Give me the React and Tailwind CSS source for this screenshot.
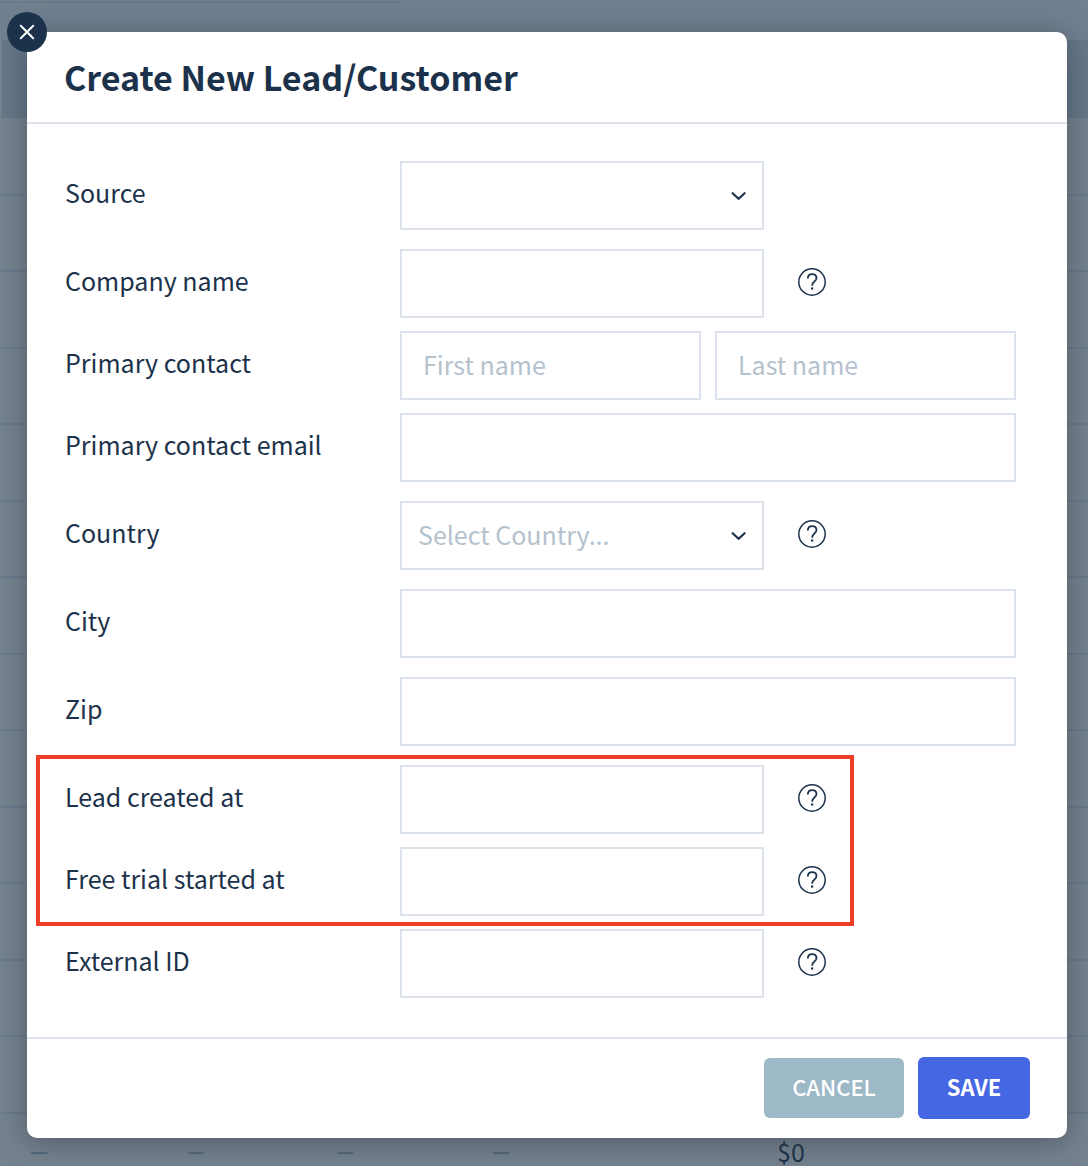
import { useState } from "react";

const tableRows = Array.from({ length: 14 }, (_, i) => i);

const HelpButton = ({ topic }) => (
  <button type="button" aria-label={`Help: ${topic}`} className="ml-[34px] shrink-0 pb-1">
    <svg
      className="h-7 w-7"
      viewBox="0 0 28 28"
      fill="none"
      stroke="currentColor"
      strokeWidth="1.5"
    >
      <circle cx="14" cy="14" r="13.2" />
      <path
        strokeWidth="1.8"
        d="M9.8 10.4C9.8 7.7 11.5 6.1 14.1 6.1S18.5 7.7 18.5 9.9C18.5 11.7 17.5 12.6 16.2 13.7C14.7 14.9 14.1 15.7 14.1 17.7"
      />
      <path strokeWidth="2.2" d="M14.1 19.4V21.6" />
    </svg>
  </button>
);

const FieldRow = ({ id, label, help, children }) => (
  <div className="flex items-center">
    <label htmlFor={id} className="w-[335px] shrink-0 pb-2">
      {label}
    </label>
    <div className="flex min-w-0 flex-1 items-center">
      {children}
      {help && <HelpButton topic={label} />}
    </div>
  </div>
);

const TextField = ({ id, short, ...props }) => (
  <input
    id={id}
    type="text"
    className={`h-[69px] min-w-0 border-2 border-[#dce3ec] bg-white px-[21px] pb-1 outline-none placeholder:text-[#b4c2ce] focus:border-[#4667e3] ${
      short ? "w-[364px]" : "w-full"
    }`}
    {...props}
  />
);

const SelectField = ({ id, placeholder = "", options }) => {
  const [value, setValue] = useState("");

  return (
    <div className="relative w-[364px]">
      <select
        id={id}
        value={value}
        onChange={(e) => setValue(e.target.value)}
        className={`h-[69px] w-full appearance-none border-2 border-[#dce3ec] bg-white pr-12 pb-1 pl-4 leading-10 outline-none focus:border-[#4667e3] ${
          value ? "text-[#1c324b]" : "text-[#b4c2ce]"
        }`}
      >
        <option value="">{placeholder}</option>
        {options.map((option) => (
          <option key={option} value={option}>
            {option}
          </option>
        ))}
      </select>
      <svg
        className="pointer-events-none absolute top-[30px] right-4 h-[10px] w-[18px]"
        viewBox="0 0 18 10"
        fill="none"
        stroke="currentColor"
        strokeWidth="2.2"
        strokeLinecap="round"
      >
        <path d="M2.6 2.2L8.6 7.8L14.6 2.2" />
      </svg>
    </div>
  );
};

/* Customers list behind the dialog */
const CustomersPage = () => (
  <div aria-hidden="true" className="absolute inset-0 overflow-hidden bg-[#708090]">
    <div className="h-10">
      <div className="h-[3px] w-[400px] border-r-2 border-b-2 border-[#687987] bg-[#75838f]" />
    </div>
    <table className="w-full table-fixed bg-[#75838f]">
      <thead>
        <tr className="h-[78px] border-l-2 border-[#75838f] bg-[#667888]">
          <th className="w-[186px]" />
          <th className="w-[149px]" />
          <th className="w-[156px]" />
          <th className="w-[285px]" />
          <th />
        </tr>
      </thead>
      <tbody>
        {tableRows.map((row) => (
          <tr
            key={row}
            className="border-b-2 border-[#687a8c] leading-none odd:h-[77px] even:h-[76px]"
          >
            <td className="pl-[29px] text-xl font-bold text-[#50667a]">{row === 13 && "—"}</td>
            <td className="text-xl font-bold text-[#50667a]">{row === 13 && "—"}</td>
            <td className="text-xl font-bold text-[#50667a]">{row === 13 && "—"}</td>
            <td className="text-xl font-bold text-[#50667a]">{row === 13 && "—"}</td>
            <td>{row === 13 && "$0"}</td>
          </tr>
        ))}
      </tbody>
    </table>
  </div>
);

const App = () => {
  return (
    <div className="relative min-h-screen overflow-hidden pt-8 pr-[21px] pb-7 pl-[27px] font-['Noto_Sans_CJK_SC',sans-serif] text-[25px] leading-8 text-[#1c324b]">
      <CustomersPage />

      <form
        role="dialog"
        aria-labelledby="dialog-title"
        onSubmit={(e) => e.preventDefault()}
        className="relative rounded-[10px] bg-white shadow-[0_4px_30px_rgba(50,55,65,0.55)]"
      >
        <button
          type="button"
          aria-label="Close"
          className="absolute -top-5 -left-5 flex h-10 w-10 items-center justify-center rounded-full bg-[#1c324b] text-white"
        >
          <svg
            className="h-4 w-4"
            viewBox="0 0 16 16"
            stroke="currentColor"
            strokeWidth="2"
            strokeLinecap="round"
          >
            <path d="M1.8 1.8L14.2 14.2M14.2 1.8L1.8 14.2" />
          </svg>
        </button>

        {/* Header */}
        <header className="flex h-[92px] items-center border-b-2 border-[#dce3ec] px-[37px]">
          <h1 id="dialog-title" className="text-[34px] font-bold">
            Create New Lead/Customer
          </h1>
        </header>

        {/* Fields */}
        <div className="flex flex-col gap-[19px] pt-[37px] pr-[51px] pb-[39px] pl-[38px]">
          <FieldRow id="source" label="Source">
            <SelectField id="source" options={["Manual", "Import"]} />
          </FieldRow>

          <div className="flex flex-col gap-[13px]">
            <FieldRow id="company" label="Company name" help>
              <TextField id="company" short />
            </FieldRow>
            <FieldRow id="first-name" label="Primary contact">
              <div className="grid w-full grid-cols-2 gap-[14px]">
                <TextField id="first-name" placeholder="First name" />
                <TextField id="last-name" placeholder="Last name" aria-label="Last name" />
              </div>
            </FieldRow>
            <FieldRow id="email" label="Primary contact email">
              <TextField id="email" />
            </FieldRow>
          </div>

          <FieldRow id="country" label="Country" help>
            <SelectField
              id="country"
              placeholder="Select Country..."
              options={["Germany", "United Kingdom", "United States"]}
            />
          </FieldRow>
          <FieldRow id="city" label="City">
            <TextField id="city" />
          </FieldRow>
          <FieldRow id="zip" label="Zip">
            <TextField id="zip" />
          </FieldRow>

          <div className="flex flex-col gap-[13px]">
            <div className="relative flex flex-col gap-[13px]">
              <FieldRow id="lead-created" label="Lead created at" help>
                <TextField id="lead-created" short />
              </FieldRow>
              <FieldRow id="trial-started" label="Free trial started at" help>
                <TextField id="trial-started" short />
              </FieldRow>
              {/* Callout around the two date fields */}
              <div className="pointer-events-none absolute -inset-y-[10px] -left-[29px] w-[818px] border-4 border-[#ee3f26]" />
            </div>
            <FieldRow id="external-id" label="External ID" help>
              <TextField id="external-id" short />
            </FieldRow>
          </div>
        </div>

        {/* Actions */}
        <footer className="flex items-center justify-end gap-[14px] border-t-2 border-[#dce3ec] pt-[18px] pr-[37px] pb-[19px]">
          <button
            type="button"
            className="h-[60px] w-[140px] rounded-md bg-[#9db8c7] pb-1 text-[22px] font-medium text-white"
          >
            CANCEL
          </button>
          <button
            type="submit"
            className="h-[62px] w-28 rounded-md bg-[#4667e3] pb-1 text-[22px] font-bold text-white"
          >
            SAVE
          </button>
        </footer>
      </form>
    </div>
  );
};

export default App;
